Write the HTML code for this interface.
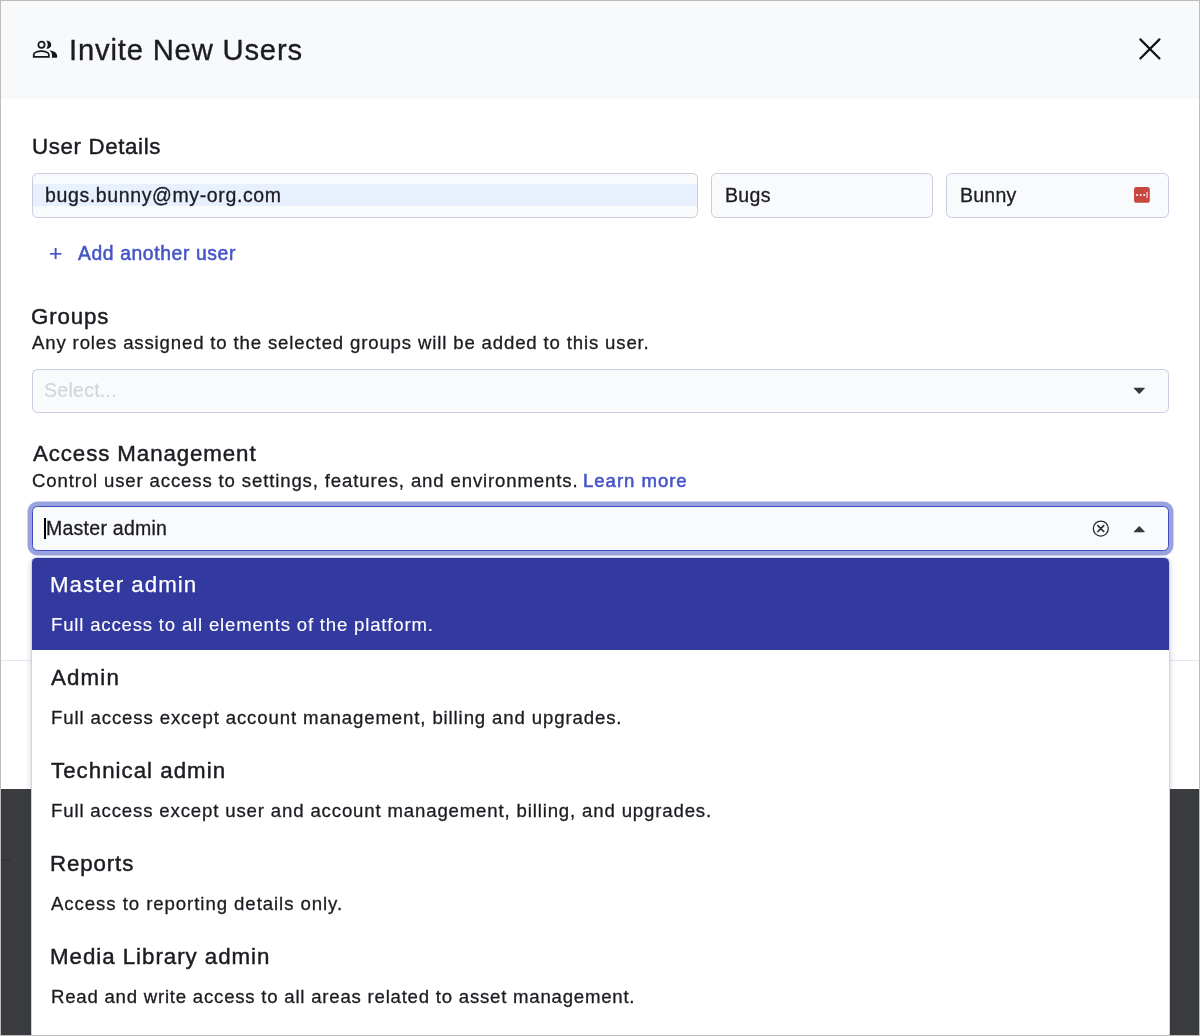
<!DOCTYPE html>
<html lang="en"><head><meta charset="utf-8"><title>Invite New Users</title>
<style>
*{box-sizing:border-box}
html,body{margin:0;padding:0}
body{width:1200px;height:1036px;overflow:hidden;position:relative;background:#3b3c40;font-family:"Liberation Sans",sans-serif;}
.t{position:absolute;white-space:pre;line-height:40px;will-change:transform;}
.abs{position:absolute}
.frame{position:absolute;left:0;top:0;width:1200px;height:1036px;border:1px solid #bcbcbc;pointer-events:none;z-index:50}
.modal{position:absolute;left:1px;top:1px;width:1198px;height:788.2px;background:#fff}
.hdr{position:absolute;left:0;top:0;width:1198px;height:98px;background:#f8f9fb}
.inp{position:absolute;top:173px;height:44.8px;background:#f9fafc;border:1px solid #c9ccde;border-radius:5.5px;overflow:hidden}
.sel{position:absolute;left:32.25px;width:1136.6px;height:44.2px;background:#f9fafc;border:1px solid #c9ccde;border-radius:5.5px}
.menu{position:absolute;left:31px;top:556.8px;width:1139px;height:482px;background:#fff;border:1px solid #cfd2e6;border-radius:5.5px;box-shadow:0 2px 6px rgba(40,45,90,.2);overflow:hidden}
.optsel{position:absolute;left:0;top:0;width:100%;height:92.7px;background:#323a9f}
</style></head><body>
<div class="modal">
 <div class="hdr"></div>
 <div class="abs" style="left:0;top:659.2px;width:1198px;height:1px;background:#e3e5f1"></div>
</div>
<!-- header icon -->
<svg class="abs" style="left:30px;top:38px" width="30" height="22" viewBox="0 0 30 22"><g fill="none" stroke="#16171b" stroke-width="1.8"><circle cx="11.5" cy="6.7" r="3.12" stroke-width="1.75"/><path d="M3.78 18.85 V16.6 C3.78 14.3 8 13.15 11.3 13.15 C14.6 13.15 18.85 14.3 18.85 16.6 V18.85 Z"/></g><g fill="#16171b"><path d="M16.25 2.83 A4 4 0 1 1 16.25 10.57 A5.74 5.74 0 0 0 16.25 2.83 Z"/><path d="M19.25 12.25 C22.5 12.6 27.1 14.2 27.1 17.6 V19.75 H22 V17.3 C22 15.2 21 13.6 19.25 12.25 Z"/></g></svg>
<span class="t" style="left:69.25px;top:30.00px;font-size:29.2px;letter-spacing:0.833px;color:#1b1c21;-webkit-text-stroke:0.35px #1b1c21;">Invite New Users</span>
<!-- close -->
<svg class="abs" style="left:1130px;top:29px" width="40" height="40" viewBox="0 0 40 40"><path d="M10.35 10.35 L29.45 29.45 M29.45 10.35 L10.35 29.45" stroke="#101114" stroke-width="2.2" stroke-linecap="round" fill="none"/></svg>
<span class="t" style="left:32.00px;top:127.00px;font-size:22.3px;letter-spacing:0.636px;color:#1b1c21;-webkit-text-stroke:0.45px #1b1c21;">User Details</span>
<div class="inp" style="left:32.25px;width:665.6px"><div class="abs" style="left:0;top:10px;width:100%;height:21.8px;background:#e8f0fe"></div></div>
<div class="inp" style="left:711.25px;width:221.6px"></div>
<div class="inp" style="left:946.25px;width:222.6px"></div>
<span class="t" style="left:45.25px;top:175.00px;font-size:19.5px;letter-spacing:0.625px;color:#1b1c21;-webkit-text-stroke:0.3px #1b1c21;">bugs.bunny@my-org.com</span><span class="t" style="left:725.00px;top:175.00px;font-size:19.5px;letter-spacing:0.333px;color:#1b1c21;-webkit-text-stroke:0.3px #1b1c21;">Bugs</span><span class="t" style="left:960.00px;top:175.00px;font-size:19.5px;letter-spacing:0.25px;color:#1b1c21;-webkit-text-stroke:0.3px #1b1c21;">Bunny</span>
<!-- password manager icon -->
<svg class="abs" style="left:1134.2px;top:187px" width="15.8" height="15.8" viewBox="0 0 16 16"><rect x="0" y="0" width="16" height="16" rx="2.6" fill="#c8473f"/><circle cx="3.1" cy="8.1" r="1" fill="#fff"/><circle cx="6.7" cy="8.1" r="1" fill="#fff"/><circle cx="10.3" cy="8.1" r="1" fill="#fff"/><rect x="12.7" y="5" width="1" height="6.2" fill="#fff"/></svg>
<span class="t" style="left:48.70px;top:233.00px;font-size:22.8px;letter-spacing:0.0px;color:#4555c6;-webkit-text-stroke:0.2px #4555c6;">+</span><span class="t" style="left:78.00px;top:234.00px;font-size:19.3px;letter-spacing:0.627px;color:#4555c6;-webkit-text-stroke:0.55px #4555c6;">Add another user</span>
<span class="t" style="left:31.30px;top:297.00px;font-size:22.3px;letter-spacing:0.88px;color:#1b1c21;-webkit-text-stroke:0.45px #1b1c21;">Groups</span><span class="t" style="left:32.20px;top:323.00px;font-size:18.6px;letter-spacing:0.847px;color:#1b1c21;-webkit-text-stroke:0.3px #1b1c21;">Any roles assigned to the selected groups will be added to this user.</span>
<div class="sel" style="top:368.5px"></div>
<span class="t" style="left:44.00px;top:370.00px;font-size:19.5px;letter-spacing:0.275px;color:#d2d4dc;-webkit-text-stroke:0.15px #d2d4dc;">Select...</span>
<svg class="abs" style="left:1133px;top:387px" width="13" height="8" viewBox="0 0 13 8"><path d="M1.3 0.8 H11.3 Q12.3 0.8 11.6 1.6 L6.9 6.5 Q6.3 7.1 5.7 6.5 L1 1.6 Q0.3 0.8 1.3 0.8Z" fill="#36373c"/></svg>
<span class="t" style="left:32.50px;top:434.00px;font-size:22.3px;letter-spacing:0.9px;color:#1b1c21;-webkit-text-stroke:0.45px #1b1c21;">Access Management</span><span class="t" style="left:31.50px;top:461.00px;font-size:18.6px;letter-spacing:0.856px;color:#1b1c21;-webkit-text-stroke:0.3px #1b1c21;">Control user access to settings, features, and environments.</span><span class="t" style="left:583.00px;top:461.00px;font-size:18.6px;letter-spacing:0.956px;color:#4555c6;-webkit-text-stroke:0.55px #4555c6;">Learn more</span>
<div class="sel" style="top:506.2px;height:44.8px;border-color:#3f4dc1;box-shadow:0 0 0 4.5px #9aa3df"></div>
<div class="abs" style="left:44px;top:518px;width:2px;height:21px;background:#000"></div>
<span class="t" style="left:45.90px;top:508.00px;font-size:19.5px;letter-spacing:0.255px;color:#1b1c21;-webkit-text-stroke:0.3px #1b1c21;">Master admin</span>
<svg class="abs" style="left:1091px;top:519px" width="20" height="20" viewBox="0 0 20 20" fill="none" stroke="#2b2c31"><circle cx="9.8" cy="9.6" r="7.5" stroke-width="1.3"/><path d="M6.9 6.7 L12.7 12.5 M12.7 6.7 L6.9 12.5" stroke-width="1.7" stroke-linecap="round"/></svg>
<svg class="abs" style="left:1133px;top:525px" width="13" height="8" viewBox="0 0 13 8"><path d="M1.3 7.2 H11.3 Q12.3 7.2 11.6 6.4 L6.9 1.5 Q6.3 0.9 5.7 1.5 L1 6.4 Q0.3 7.2 1.3 7.2Z" fill="#36373c"/></svg>
<div class="menu"><div class="optsel"></div></div>
<span class="t" style="left:50.40px;top:565.00px;font-size:22.3px;letter-spacing:1.0px;color:#ffffff;-webkit-text-stroke:0.25px #ffffff;">Master admin</span><span class="t" style="left:51.20px;top:605.00px;font-size:18.6px;letter-spacing:0.805px;color:#ffffff;-webkit-text-stroke:0.12px #ffffff;">Full access to all elements of the platform.</span><span class="t" style="left:51.40px;top:658.00px;font-size:22.3px;letter-spacing:1.175px;color:#1b1c21;-webkit-text-stroke:0.45px #1b1c21;">Admin</span><span class="t" style="left:51.20px;top:698.00px;font-size:18.6px;letter-spacing:0.875px;color:#1b1c21;-webkit-text-stroke:0.3px #1b1c21;">Full access except account management, billing and upgrades.</span><span class="t" style="left:51.40px;top:751.00px;font-size:22.3px;letter-spacing:1.014px;color:#1b1c21;-webkit-text-stroke:0.45px #1b1c21;">Technical admin</span><span class="t" style="left:51.20px;top:791.00px;font-size:18.6px;letter-spacing:0.849px;color:#1b1c21;-webkit-text-stroke:0.3px #1b1c21;">Full access except user and account management, billing, and upgrades.</span><span class="t" style="left:50.40px;top:844.00px;font-size:22.3px;letter-spacing:0.867px;color:#1b1c21;-webkit-text-stroke:0.45px #1b1c21;">Reports</span><span class="t" style="left:51.00px;top:884.00px;font-size:18.6px;letter-spacing:0.938px;color:#1b1c21;-webkit-text-stroke:0.3px #1b1c21;">Access to reporting details only.</span><span class="t" style="left:50.40px;top:937.00px;font-size:22.3px;letter-spacing:0.967px;color:#1b1c21;-webkit-text-stroke:0.45px #1b1c21;">Media Library admin</span><span class="t" style="left:51.20px;top:977.00px;font-size:18.6px;letter-spacing:0.776px;color:#1b1c21;-webkit-text-stroke:0.3px #1b1c21;">Read and write access to all areas related to asset management.</span>
<div class="abs" style="left:1px;top:858.5px;width:10px;height:2px;background:#35363a"></div>
<div class="frame"></div>
</body></html>
